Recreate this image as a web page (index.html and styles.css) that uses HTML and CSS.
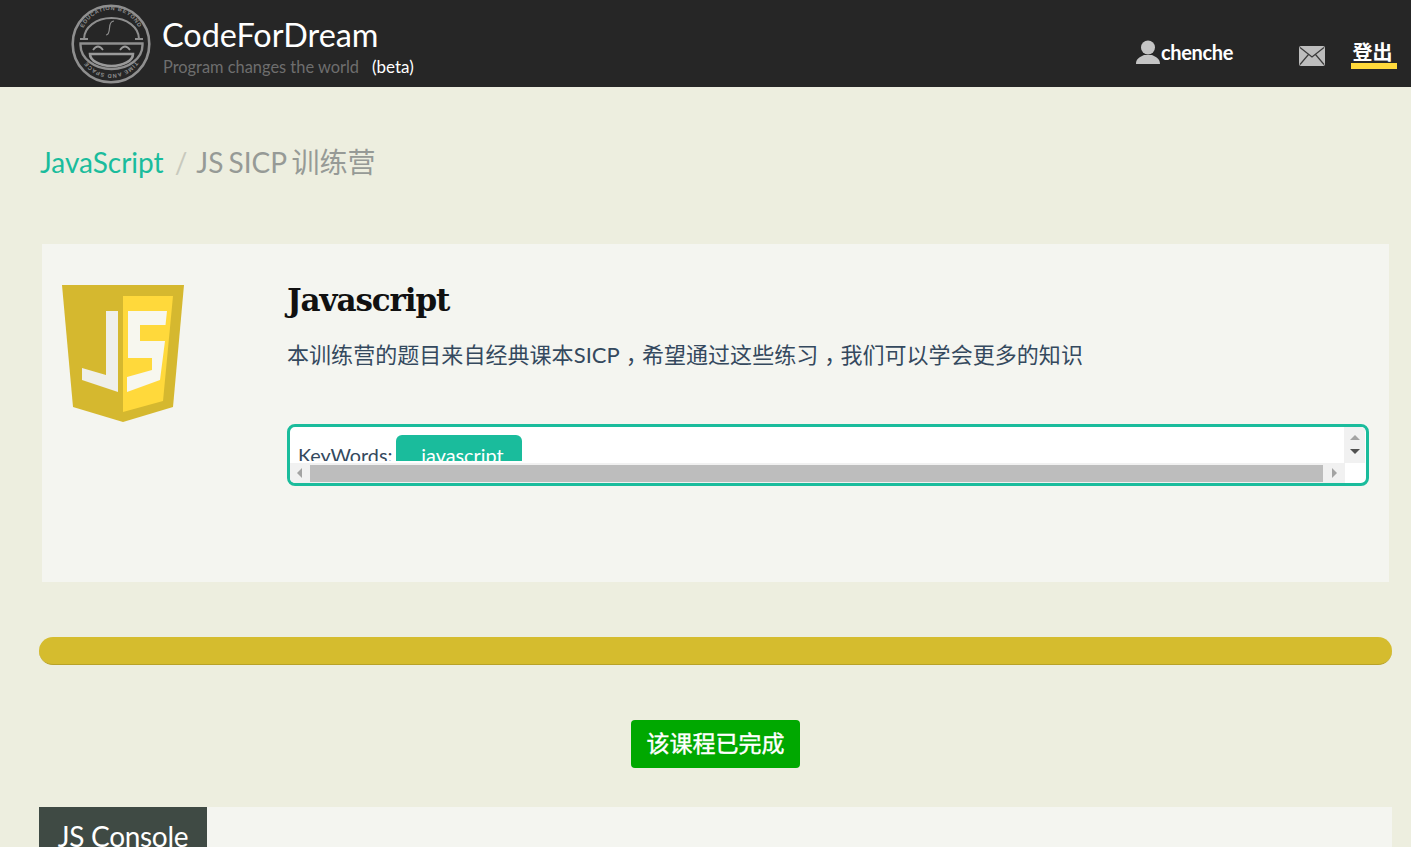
FILE: index.html
```html
<!DOCTYPE html>
<html lang="zh">
<head>
<meta charset="utf-8">
<title>JS SICP 训练营</title>
<link rel="stylesheet" href="styles.css">
</head>
<body>
<header class="topbar">
  <div class="brand">
    <svg class="logo" viewBox="0 0 80 80" width="80" height="80" aria-hidden="true">
      <circle cx="40" cy="40" r="38.3" fill="none" stroke="#8f8f8f" stroke-width="2.6"/>
      <defs>
        <path id="arcTop" d="M10 36 A30 30 0 0 1 70 36"/>
        <path id="arcBot" d="M66 54.5 A29.5 29.5 0 0 1 14 54.5"/>
      </defs>
      <text class="logo-text"><textPath href="#arcTop" startOffset="50%" text-anchor="middle">EDUCATION BEYOND</textPath></text>
      <text class="logo-text"><textPath href="#arcBot" startOffset="50%" text-anchor="middle">TIME AND SPACE</textPath></text>
      <path d="M13 35 A27.5 21 0 0 1 68 35" fill="none" stroke="#8f8f8f" stroke-width="2"/>
      <path d="M9 35 H17 M64 35 H72" stroke="#8f8f8f" stroke-width="2"/>
      <path d="M9.5 39.5 H71.5 V41 A31 24 0 0 1 9.5 41 Z" fill="none" stroke="#8f8f8f" stroke-width="2.4"/>
      <path d="M19 50 H62 A21.5 12 0 0 1 19 50 Z" fill="none" stroke="#9a9a9a" stroke-width="2.6"/>
      <path d="M22 46 Q27 39 32 46 M49 46 Q54 39 59 46" fill="none" stroke="#9a9a9a" stroke-width="1.8"/>
      <path d="M35 31 Q38 31 38.5 24 Q39 17 43 17" fill="none" stroke="#8f8f8f" stroke-width="1.2"/>
    </svg>
    <div class="brand-text">
      <div class="brand-name">CodeForDream</div>
      <div class="brand-sub"><span class="slogan">Program changes the world</span><span class="beta">(beta)</span></div>
    </div>
  </div>
  <nav class="usernav">
    <a class="user">
      <svg viewBox="0 0 24 24" width="24" height="24" aria-hidden="true"><circle cx="12" cy="7.5" r="7" fill="#c4c4c4"/><path d="M0 24 C0 18 4 17.5 8 15 H16 C20 17.5 24 18 24 24 Z" fill="#c4c4c4"/></svg>
      <span>chenche</span>
    </a>
    <svg class="mail" viewBox="0 0 26 20" width="26" height="20" aria-hidden="true"><rect width="26" height="20" rx="2" fill="#bdbdbd"/><path d="M1 1.5 L13 11 L25 1.5 M1 18.5 L9.5 8.5 M25 18.5 L16.5 8.5" fill="none" stroke="#3a3a3a" stroke-width="1.2"/></svg>
    <a class="logout">登出</a>
  </nav>
</header>

<main class="page">
  <div class="crumbs"><a class="crumb-link">JavaScript</a><span class="crumb-sep">/</span><span class="crumb-cur">JS SICP 训练营</span></div>

  <section class="card">
    <div class="badge">
      <svg viewBox="0 0 122 137" width="122" height="137" aria-hidden="true">
        <path d="M0 0 H122 L111 122 L61 137 L11 122 Z" fill="#d5b82f"/>
        <path d="M61 11 H111 L101 116 L61 127 Z" fill="#ffd93b"/>
        <path d="M44 26 H56 V107 L20 95 V83 L44 90 Z" fill="#efefea"/>
        <path d="M66 26 H105 L103.5 40 H78 V56 H103 L98 95 L65 107 V92 L90 85 V73 H66 Z" fill="#f7f7ef"/>
      </svg>
    </div>
    <div class="card-body">
      <h1 class="card-title">Javascript</h1>
      <p class="card-desc">本训练营的题目来自经典课本SICP<span class="cm">，</span>希望通过这些练习<span class="cm">，</span>我们可以学会更多的知识</p>
      <div class="keywords">
        <div class="kw-view">
          <div class="kw-content"><span class="kw-label">KeyWords:</span><span class="tag">javascript</span></div>
          <div class="vbar"><i class="arrow up"></i><i class="arrow down"></i></div>
        </div>
        <div class="hbar"><i class="arrow left"></i><div class="thumb"></div><i class="arrow right"></i></div>
      </div>
    </div>
  </section>

  <div class="progress"></div>

  <div class="action"><a class="done-btn">该课程已完成</a></div>

  <section class="console">
    <div class="console-tab">JS Console</div>
  </section>
</main>
</body>
</html>
```
FILE: styles.css
```css
* { box-sizing: border-box; }
html, body { height: 100%; overflow: hidden; }
body {
  margin: 0;
  background: #edeedf;
  font-family: Lato, "Noto Sans CJK SC", sans-serif;
  color: #34495e;
}
.topbar {
  height: 87px;
  background: #262626;
  display: flex;
  justify-content: space-between;
  padding: 0 14px 0 71px;
}
.brand { display: flex; align-items: flex-start; padding-top: 4px; }
.logo { display: block; flex: none; }
.logo-text { font: bold 5.6px "Liberation Sans", sans-serif; fill: #8f8f8f; letter-spacing: .7px; }
.brand-text { margin-left: 11px; }
.brand-name { font-size: 32.4px; line-height: 38px; color: #fff; margin-top: 12px; }
.brand-sub { font-size: 16.4px; line-height: 20px; margin-top: 3px; padding-left: 1px; }
.slogan { color: #6e6e6e; }
.beta { color: #fff; margin-left: 13px; font-size: 17px; }
.usernav { display: flex; align-items: flex-start; padding-top: 40px; }
.user { display: flex; align-items: center; font-weight: bold; color: #fff; font-size: 20px; line-height: 24px; letter-spacing: -.35px; }
.user span { margin-left: 1px; }
.mail { margin: 6px 0 0 66px; }
.logout {
  margin-left: 26px;
  color: #fff;
  font-size: 20px;
  font-weight: bold;
  line-height: 25px;
  width: 46px;
  padding-right: 3px;
  text-align: center;
  border-bottom: 6px solid #ffd93b;
  height: 29px;
}
.page { padding: 0 19px 0 39px; }
.crumbs { padding-top: 56px; padding-left: 1px; font-size: 28px; line-height: 38px; display: flex; height: 157px; }
.crumb-link { color: #1abc9c; }
.crumb-sep { color: #c8c9bd; margin: 0 9px 0 11px; }
.crumb-cur { color: #969a96; word-spacing: -2px; }
.card {
  margin-left: 3px;
  margin-right: 3px;
  height: 338px;
  background: #f4f5f0;
  display: flex;
}
.badge { width: 245px; flex: none; padding: 41px 0 0 20px; }
.badge svg { display: block; }
.card-body { flex: 1; padding-right: 20px; }
.card-title {
  margin: 37px 0 0;
  font: bold 31px/38px "DejaVu Serif", serif;
  color: #111;
  letter-spacing: -1.1px;
  height: 38px;
}
.card-desc { margin: 20px 0 0; font-size: 22px; line-height: 32px; color: #34495e; height: 32px; letter-spacing: .05px; }
.cm { font-feature-settings: "halt"; padding: 0 5px 0 6px; }
.keywords {
  margin-top: 53px;
  height: 62px;
  border: 3px solid #1abc9c;
  border-radius: 8px;
  background: #fff;
  overflow: hidden;
}
.kw-view { display: flex; height: 37px; }
.kw-content { flex: 1; height: 34px; padding: 8px 0 0 8px; display: flex; align-items: flex-start; overflow: hidden; font-size: 19.8px; }
.kw-label { margin-top: 8px; line-height: 24px; margin-right: 4px; }
.tag {
  width: 126px;
  height: 40px;
  text-align: center;
  background: #1abc9c;
  color: #fff;
  border-radius: 6px;
  line-height: 24px;
  padding: 8px 0 0 6px;
  flex: none;
}
.vbar { width: 21px; flex: none; height: 36px; background: #f1f1f1; margin-right: 1px; display: flex; flex-direction: column; align-items: center; padding-top: 8px; gap: 9px; }
.hbar { height: 20px; width: 1055px; background: #f1f1f1; display: flex; align-items: center; margin-top: -1px; }
.thumb { width: 1013px; height: 17px; background: #bdbdbd; margin: 0 9px 0 8px; }
.arrow { display: block; width: 0; height: 0; border-style: solid; border-color: transparent; }
.arrow.up { border-width: 0 5px 5px; border-bottom-color: #a3a3a3; }
.arrow.down { border-width: 5px 5px 0; border-top-color: #505050; }
.arrow.left { border-width: 5px 5px 5px 0; border-right-color: #a3a3a3; margin-left: 7px; }
.arrow.right { border-width: 5px 0 5px 5px; border-left-color: #a3a3a3; }
.progress {
  margin-top: 55px;
  height: 28px;
  background: #d5bc2e;
  border-bottom: 1px solid #b8a228;
  border-radius: 14px;
}
.action { margin-top: 55px; display: flex; justify-content: center; }
.done-btn {
  width: 169px;
  height: 48px;
  background: #00a800;
  color: #fff;
  border-radius: 4px;
  font-size: 23px;
  line-height: 47px;
  text-align: center;
  -webkit-text-stroke: .4px #fff;
}
.console { margin-top: 39px; background: #f4f5f0; height: 300px; }
.console-tab {
  width: 168px;
  height: 100px;
  background: #3f4a44;
  color: #fff;
  font-size: 28px;
  line-height: 38px;
  padding-top: 10px;
  text-align: center;
  letter-spacing: -.3px;
}
```
